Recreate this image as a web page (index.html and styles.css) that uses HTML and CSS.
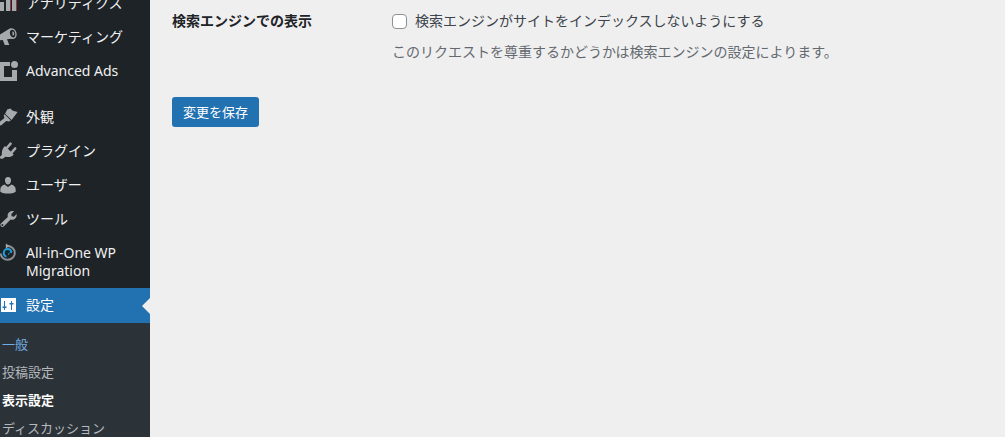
FILE: index.html
```html
<!DOCTYPE html>
<html lang="ja">
<head>
<meta charset="utf-8">
<title>表示設定</title>
<link rel="stylesheet" href="styles.css">
</head>
<body>
<div class="admin">
  <nav class="sidebar" aria-label="メインメニュー">
    <ul class="menu">
      <li><a class="item" href="#"><svg class="icon" viewBox="0 0 18 20"><path d="M0 9h4v9H0zM6 6h4v12H6zM12 2h4v16h-4z"/><path class="red" d="M10 2h1v16h-1zM16 2h1v16h-1z"/></svg><span>アナリティクス</span></a></li>
      <li><a class="item" href="#"><svg class="icon" viewBox="0 0 18 20"><path fill-rule="evenodd" d="M0 7.500 8.500 2.200C10 1 12.500.8 14.500 2.500c2.600 2.300 2.900 6.500.8 8.600-1.300 1.200-2.600 1.100-4 .7L7 12.300l2.300 5.700H4.800L2.800 13 0 13.200zM12.300 2.800c-2 .1-2.800 1.800-2.300 4.200.5 2.300 2.100 3.800 3.600 3.500 1.600-.4 2-2.200 1.600-4.200-.4-2-1.500-3.500-2.900-3.500z"/><path d="M12 4.500c1.600 0 2.400 1.200 2.200 2.600-.1 1.200-1 1.700-1.900 1.400.5-1.300.4-2.600-.3-4z"/></svg><span>マーケティング</span></a></li>
      <li><a class="item" href="#"><svg class="icon" viewBox="0 0 18 20"><path d="M0 1h10v4H4v11h8V9h5v11H0z"/><circle cx="14.500" cy="3.500" r="3.500"/></svg><span>Advanced Ads</span></a></li>
    </ul>
    <ul class="menu">
      <li><a class="item" href="#"><svg class="icon" viewBox="0 0 18 20"><path d="m7.200 2.400 3.200-.9 2 2 1.500.6 3.700.8-6 8.200L5.100 6.700z"/><path d="m4.500 7.300 6.300 6.300-1.900.9-2.700-.6L1 18.500l-1-.3v-3.700l4.500-3.400-.8-2.300z"/></svg><span>外観</span></a></li>
      <li><a class="item" href="#"><svg class="icon" viewBox="0 0 18 20"><path d="m5 5 8.700 8.500c-2 2.400-5.200 3.200-8.200 2.200L2.200 18 0 17.300v-1.600l1.900-1.900C1.500 10.500 2.500 7 5 5z"/><path class="prong" d="m7.200 6.500 3.400-3.800M12 11.200l3.200-3.700"/></svg><span>プラグイン</span></a></li>
      <li><a class="item" href="#"><svg class="icon" viewBox="0 0 18 20"><path d="M8 2c2.100 0 3.300 1.500 3 3.700C10.800 7.800 9.500 9.500 8 9.500S5.200 7.800 5 5.700C4.700 3.500 5.900 2 8 2zM4.500 9.500 8 12l3.500-2.500c2.600.8 4.200 2.700 4.200 5v2.200c-2.200 1.400-4.700 1.900-7.700 1.900S2.500 18.100.3 16.700v-2.200c0-2.300 1.600-4.200 4.200-5z"/></svg><span>ユーザー</span></a></li>
      <li><a class="item" href="#"><svg class="icon" viewBox="0 0 18 20"><path fill-rule="evenodd" d="M14 2.300 11.300 5l.4 2.300 2.300.4 2.600-2.700c.7 3.400-2.500 6.600-6 5.500L4 17.300c-2 2-5-.8-3.100-2.900L7.800 8C6.700 4.500 10.500 1.300 14 2.300zM2.400 15a1 1 0 1 0 0 2 1 1 0 0 0 0-2z"/></svg><span>ツール</span></a></li>
      <li><a class="item" href="#"><svg class="icon" viewBox="0 0 18 20"><path class="ring" d="M7.500 3c4 0 7.300 3 7.300 6.800 0 3.900-3.200 7-7.300 7-3.500 0-6.500-2.600-6.800-6.300"/><path d="m5.800.5 3.700 2.500-3.700 2.600z"/><path class="swirl" d="M11.500 9C11 7 9.500 5.900 7.700 5.900 5.400 5.900 3.700 7.700 3.700 10c0 1.900 1.100 3.300 2.800 3.800"/><path class="swirl thin" d="M12 9.500c-2-.4-3.500.6-3.500 2.300"/></svg><span>All-in-One WP Migration</span></a></li>
      <li>
        <a class="item current" href="#"><svg class="icon" viewBox="0 0 18 20"><path fill-rule="evenodd" d="M1 3h15v14H1zm3 3v5.500H2.500V13H4v2h1v-2h1.500v-1.500H5V6zm7 0v2H9.500v1.500H11V15h1V9.500h1.500V8H12V6z"/></svg><span>設定</span></a>
        <ul class="submenu">
          <li><a class="hover" href="#">一般</a></li>
          <li><a href="#">投稿設定</a></li>
          <li><a class="active" href="#">表示設定</a></li>
          <li><a href="#">ディスカッション</a></li>
        </ul>
      </li>
    </ul>
  </nav>
  <main class="content">
    <form>
      <div class="field">
        <div class="heading">検索エンジンでの表示</div>
        <div class="control">
          <label class="check" for="noindex"><input type="checkbox" id="noindex"><span>検索エンジンがサイトをインデックスしないようにする</span></label>
          <p class="description">このリクエストを尊重するかどうかは検索エンジンの設定によります。</p>
        </div>
      </div>
      <button class="save" type="button">変更を保存</button>
    </form>
  </main>
</div>
</body>
</html>
```
FILE: styles.css
```css
* { box-sizing: border-box; }
body {
  margin: 0;
  background: #efefef;
  color: #3c434a;
  font: 14px/18px "Noto Sans", "Noto Sans CJK JP", sans-serif;
}
.admin {
  display: flex;
  height: 100vh;
  overflow: hidden;
}
.sidebar {
  flex: 0 0 150px;
  background: #1d2327;
}
ul { margin: 0; padding: 0; list-style: none; }
.sidebar > .menu:first-child { margin-top: -14px; }
.menu + .menu { margin-top: 12px; }
a { text-decoration: none; }
.item {
  position: relative;
  display: flex;
  gap: 8px;
  padding: 8px 24px 8px 0;
  color: #f0f0f1;
}
.icon {
  flex: none;
  width: 18px;
  height: 20px;
  margin: -1px 0;
  fill: #a7aaad;
}
.red { fill: #8b3a45; }
.prong { fill: none; stroke: #a7aaad; stroke-width: 2.600; stroke-linecap: round; }
.ring { fill: none; stroke: #8c8f94; stroke-width: 2; }
.swirl { fill: none; stroke: #1e9fdc; stroke-width: 2; }
.thin { stroke-width: 1; }
.current {
  padding-bottom: 9px;
  background: #2271b1;
  color: #fff;
}
.current .icon { fill: #fff; }
.current::after {
  content: "";
  position: absolute;
  right: 0;
  top: 50%;
  margin-top: -8px;
  border: 8px solid transparent;
  border-left: 0;
  border-right-color: #efefef;
}
.submenu {
  padding: 7px 0;
  background: #2c3338;
  font-size: 13px;
}
.submenu a {
  display: block;
  padding: 5px 2px;
  color: #b4b9be;
}
.submenu .hover { color: #72aee6; }
.submenu .active { color: #fff; font-weight: 700; }
.content {
  flex: 1;
  padding: 12px 22px;
}
.field {
  display: grid;
  grid-template-columns: 220px 1fr;
  margin-bottom: 36px;
}
.heading { color: #1d2327; font-weight: 700; }
.check { display: flex; align-items: center; gap: 8px; }
.check input {
  appearance: none;
  width: 15px;
  height: 15px;
  margin: 0;
  border: 1px solid #8c8f94;
  border-radius: 4px;
  background: #fff;
}
.description { margin: 13px 0 0; color: #646970; }
.save {
  height: 30px;
  padding: 0 11px;
  border: 0;
  border-radius: 3px;
  background: #2271b1;
  color: #fff;
  font: inherit;
  font-size: 13px;
}
```
